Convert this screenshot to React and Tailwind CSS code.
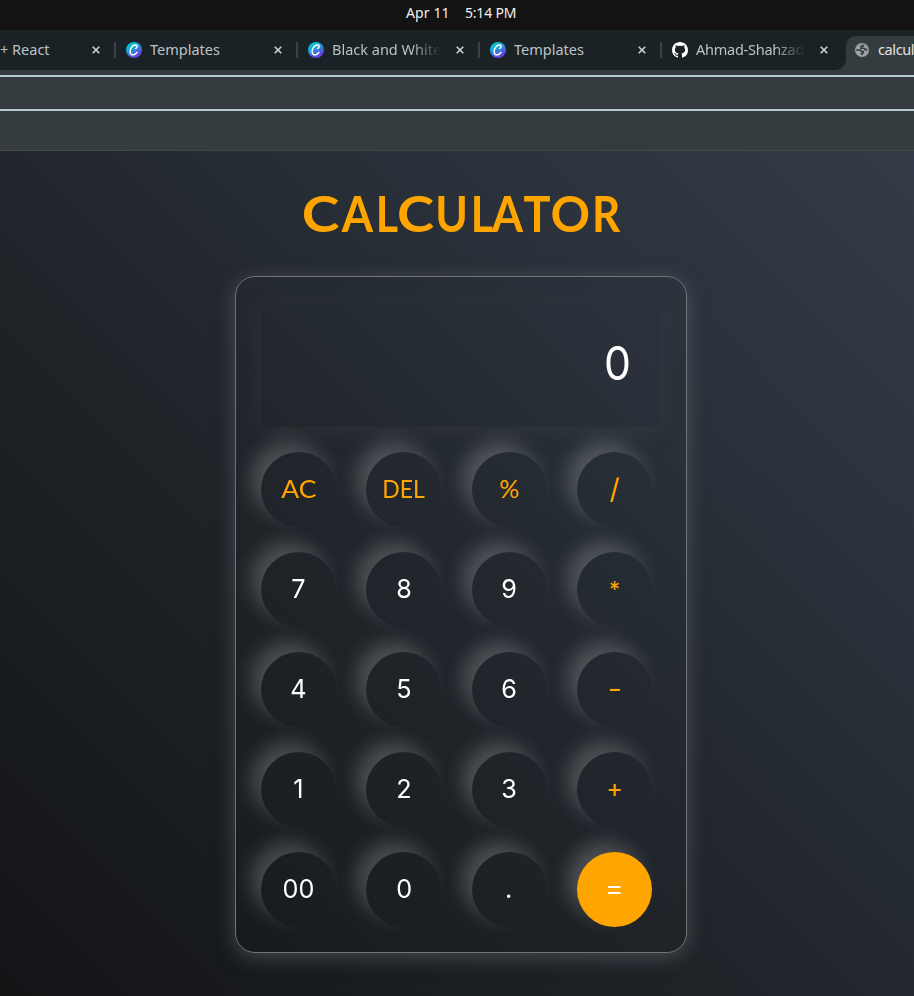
function CanvaIcon({ id }) {
  return (
    <svg width="16" height="16" viewBox="0 0 16 16" className="shrink-0">
      <defs>
        <linearGradient id={id} x1="0.25" y1="0" x2="0.8" y2="1">
          <stop offset="0" stopColor="#00c4cc" />
          <stop offset="0.3" stopColor="#12b0d4" />
          <stop offset="0.65" stopColor="#4a62e0" />
          <stop offset="1" stopColor="#7d2ae8" />
        </linearGradient>
      </defs>
      <circle cx="8" cy="8" r="8" fill={`url(#${id})`} />
      <path
        d="M9.600 6.500c1-.4 1.900-1.500 1.400-2.600C10.300 2.500 7.900 2.900 6.200 4.600C4.100 6.800 3.500 10.100 4.900 11.900c1.500 1.800 4.500.9 6-1.500"
        fill="none"
        stroke="#fff"
        strokeWidth="1.500"
        strokeLinecap="round"
      />
    </svg>
  );
}

function GithubIcon() {
  return (
    <svg width="16" height="16" viewBox="0 0 16 16" fill="#fff" className="shrink-0">
      <path d="M8 0C3.58 0 0 3.58 0 8c0 3.54 2.29 6.53 5.47 7.59.4.07.55-.17.55-.38 0-.19-.01-.82-.01-1.490-2.010.37-2.530-.49-2.690-.94-.09-.23-.48-.94-.82-1.130-.28-.15-.68-.52-.01-.53.63-.01 1.080.58 1.230.82.72 1.210 1.870.87 2.330.66.07-.52.28-.87.51-1.070-1.780-.2-3.640-.89-3.640-3.950 0-.87.31-1.590.82-2.150-.08-.2-.36-1.020.08-2.120 0 0 .67-.21 2.200.82.64-.18 1.320-.27 2-.27s1.360.09 2 .27c1.530-1.040 2.200-.82 2.200-.82.44 1.100.16 1.920.08 2.120.51.56.82 1.270.82 2.150 0 3.070-1.870 3.750-3.650 3.950.29.25.54.73.54 1.480 0 1.070-.01 1.930-.01 2.200 0 .21.15.46.55.38A8.010 8.010 0 0 0 16 8c0-4.420-3.580-8-8-8Z" />
    </svg>
  );
}

function GlobeIcon() {
  return (
    <svg width="14" height="14" viewBox="0 0 14 14" className="shrink-0">
      <circle cx="7" cy="7" r="7" fill="#9aa0a6" />
      <path
        d="M1.300 7h3.400c1.200 0 1.700.6 1.700 1.600h1.800v1.200c0 .7-.6 1-1.500 1v1.200M8.400 1.500v.7c0 .8-.5 1.100-1.200 1.100H6v2h2.800c.8 0 1 .5 1 1.300h2.600"
        fill="none"
        stroke="#353c3f"
        strokeWidth="1.600"
      />
    </svg>
  );
}

function CloseIcon() {
  return (
    <svg width="8" height="8" viewBox="0 0 8 8" className="shrink-0">
      <path d="M.7.7l6.600 6.600M7.300.7L.7 7.300" stroke="#ced2d4" strokeWidth="1.600" />
    </svg>
  );
}

function Tab({ icon, title, fade, spacing = "tracking-[0px]" }) {
  return (
    <div className="flex h-10 w-[182px] shrink-0 items-center">
      <span className="h-4 w-[2px] shrink-0 bg-[#3a4245]" />
      <span className="ml-[10px] flex">{icon}</span>
      <span
        className={`ml-2 w-[109px] overflow-hidden whitespace-nowrap text-[14.500px] text-[#bcc2c4] ${spacing} ${
          fade ? "[mask-image:linear-gradient(to_right,#000_72%,transparent)]" : ""
        }`}
      >
        {title}
      </span>
      <span className="ml-[15px]">
        <CloseIcon />
      </span>
    </div>
  );
}

const TITLE = [
  ["C", "w-[36px]", "scale-x-[1.14]"],
  ["A", "w-[36px]", "scale-x-[0.9]"],
  ["L", "w-[23px]", "scale-x-[0.86]"],
  ["C", "w-[35px]", "scale-x-[1.12]"],
  ["U", "w-[38px]", "scale-x-[0.88]"],
  ["L", "w-[22px]", "scale-x-[0.86]"],
  ["A", "w-[29px]", "scale-x-[0.9]"],
  ["T", "w-[30px]", "scale-x-[0.9]"],
  ["O", "w-[37px]", "scale-x-[0.98]"],
  ["R", "w-[34px]", "scale-x-[0.88]"],
];

const LATO = "font-['Lato',sans-serif]";
const INTER = "font-['Inter',sans-serif]";

const DIGIT = `${INTER} text-[26px] scale-x-[0.97]`;

const ROWS = [
  [
    { label: "AC", face: `${LATO} text-[25.500px] scale-x-[1.04]`, op: true },
    { label: "DEL", face: `${LATO} text-[25.500px] scale-x-[0.9]`, op: true },
    { label: "%", face: `${LATO} text-[25px]`, op: true },
    { label: "/", face: `${INTER} text-[28px]`, op: true },
  ],
  [
    { label: "7", face: DIGIT },
    { label: "8", face: DIGIT },
    { label: "9", face: DIGIT },
    { label: "*", face: `${INTER} text-[22px]`, op: true },
  ],
  [
    { label: "4", face: DIGIT },
    { label: "5", face: DIGIT },
    { label: "6", face: DIGIT },
    { label: "-", face: `${INTER} text-[26px] scale-x-[1.2]`, op: true },
  ],
  [
    { label: "1", face: DIGIT },
    { label: "2", face: DIGIT },
    { label: "3", face: DIGIT },
    { label: "+", face: `${INTER} text-[25px]`, op: true },
  ],
  [
    { label: "00", face: DIGIT },
    { label: "0", face: DIGIT },
    { label: ".", face: DIGIT },
    { label: "=", face: `${INTER} text-[25px] scale-x-[1.12]` },
  ],
];

function Key({ label, face, op }) {
  return (
    <button
      className={`flex size-[75px] shrink-0 items-center justify-center rounded-full pb-[2px] leading-none shadow-[-10px_-10px_19px_rgba(255,255,255,0.2)] ${
        label === "=" ? "bg-[#ffa500]" : ""
      } ${op ? "text-[#ffa500]" : "text-white"}`}
    >
      <span className={`inline-block ${face}`}>{label}</span>
    </button>
  );
}

export default function App() {
  return (
    <div className="flex h-[996px] w-[914px] flex-col overflow-hidden bg-[#131313] font-['Noto_Sans',sans-serif]">
      <div className="flex h-[30px] shrink-0 items-center pb-[5px] pl-[406px] text-[14px] text-[#f0f0f0]">
        <span className="w-[59px] tracking-[0.1px]">Apr 11</span>
        <span className="tracking-[-0.2px]">5:14 PM</span>
      </div>

      <div className="flex h-10 shrink-0 bg-[#1a2225]">
        <div className="flex w-[114px] shrink-0 items-center">
          <span className="w-[92px] text-[14.500px] text-[#bcc2c4]">+ React</span>
          <CloseIcon />
        </div>
        <Tab icon={<CanvaIcon id="c1" />} title="Templates" />
        <Tab icon={<CanvaIcon id="c2" />} title="Black and White" fade />
        <Tab icon={<CanvaIcon id="c3" />} title="Templates" />
        <Tab icon={<GithubIcon />} title="Ahmad-Shahzad" spacing="tracking-[-0.25px]" fade />
        <div className="-ml-[10px] flex w-[82px] shrink-0 bg-[#353c3f]">
          <div className="w-[14px] shrink-0 rounded-br-[11px] bg-[#1a2225]" />
          <div className="w-[68px] shrink-0 bg-[linear-gradient(#1a2225_50%,#353c3f_50%)] pt-[6px]">
            <div className="flex h-[34px] items-center rounded-tl-[10px] bg-[#353c3f] pb-[6px] pl-[9px]">
              <GlobeIcon />
              <span className="ml-[9px] whitespace-nowrap text-[14.500px] tracking-[-0.4px] text-[#e0e4e5]">
                calcul
              </span>
            </div>
          </div>
        </div>
      </div>

      <div className="h-[81px] shrink-0 border-b border-[#474747] bg-[#353c3f] pt-[5px]">
        <div className="h-9 border-y-2 border-[#b7c9cf]" />
      </div>

      <div className="flex grow flex-col bg-[linear-gradient(45deg,#131416_0%,#22272d_50%,#2a313a_72%,#343b48_100%)]">
        <h1
          className={`mt-[35px] ml-[303px] flex text-[50px] leading-[54px] font-bold text-[#ffa500] ${LATO}`}
        >
          {TITLE.map(([letter, width, scale], i) => (
            <span key={i} className={`flex shrink-0 justify-center ${width}`}>
              <span className={`inline-block ${scale}`}>{letter}</span>
            </span>
          ))}
        </h1>
        <div className="mt-[36px] ml-[235px] h-[677px] w-[452px] rounded-[20px] border border-[#717377] px-[25px] pt-[25px] shadow-[0_4px_19px_rgba(113,115,119,0.5)]">
          <div
            className={`flex h-[125px] w-[400px] items-center justify-end pr-[29px] pb-[2px] text-white shadow-[0_4px_19px_rgba(84,84,84,0.25)] ${INTER}`}
          >
            <span className="inline-block scale-x-[0.93] text-[46px]">0</span>
          </div>
          <div className="mt-[25px] flex w-[391px] flex-col gap-[25px]">
            {ROWS.map((row, i) => (
              <div key={i} className="flex justify-between">
                {row.map((k) => (
                  <Key key={k.label} {...k} />
                ))}
              </div>
            ))}
          </div>
        </div>
      </div>
    </div>
  );
}
